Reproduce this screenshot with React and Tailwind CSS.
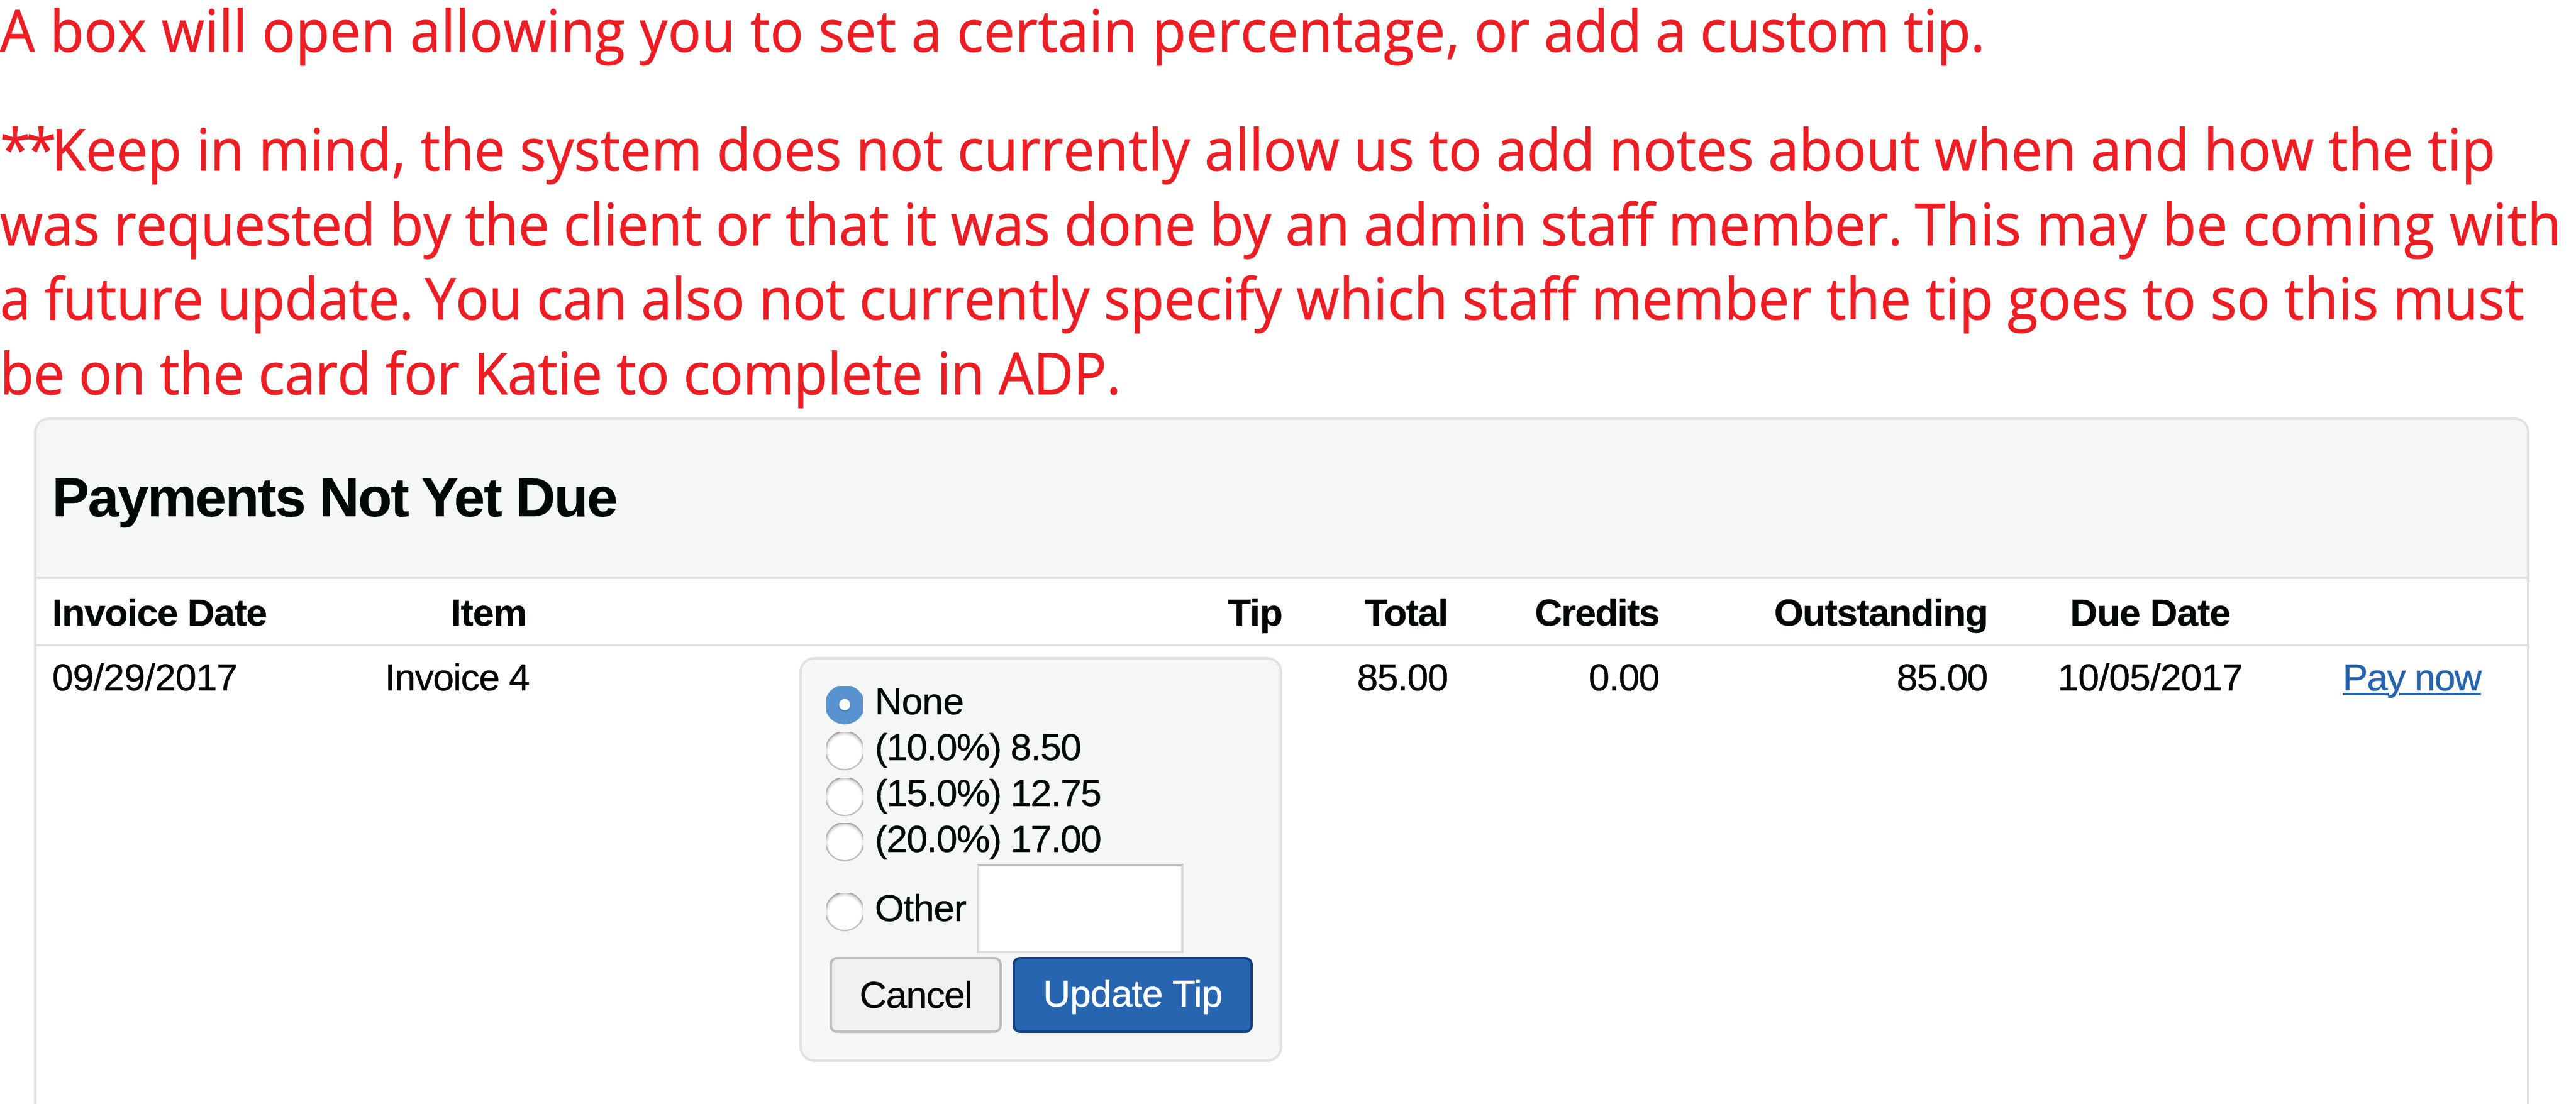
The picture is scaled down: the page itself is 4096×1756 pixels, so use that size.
import { useState } from "react";

const tipOptions = [
  { value: "none", label: "None", tracking: "tracking-[-0.5px]" },
  { value: "10", label: "(10.0%) 8.50", tracking: "tracking-[-1.35px]" },
  { value: "15", label: "(15.0%) 12.75", tracking: "tracking-[-1.35px]" },
  { value: "20", label: "(20.0%) 17.00", tracking: "tracking-[-1.35px]" },
];

const gridColumns =
  "grid grid-cols-[529px_330px_1097px_263px_336px_522px_518px_1fr] pl-[25px]";

function RadioMark({ checked }) {
  return (
    <svg viewBox="0 0 58.4 61.6" className="mt-[11px] h-[61.6px] w-[58.4px] shrink-0 overflow-hidden">
      <defs>
        <linearGradient id="rim" x1="0" y1="0" x2="0" y2="1">
          <stop offset="0" stopColor="#a6a6a6" />
          <stop offset="0.3" stopColor="#b4b4b4" />
          <stop offset="1" stopColor="#bebebe" />
        </linearGradient>
        <radialGradient id="face" cx="0.5" cy="0.54" r="0.52">
          <stop offset="0.82" stopColor="#ffffff" />
          <stop offset="1" stopColor="#cccccc" />
        </radialGradient>
      </defs>
      {checked ? (
        <>
          <circle cx="29.2" cy="29.9" r="31.6" fill="#5993cf" />
          <circle cx="29.2" cy="31.8" r="10" fill="#4684c8" />
          <circle cx="29.2" cy="29.7" r="8.9" fill="#ffffff" />
        </>
      ) : (
        <circle cx="29.2" cy="29.9" r="30.3" fill="url(#face)" stroke="url(#rim)" strokeWidth="2.2" />
      )}
    </svg>
  );
}

function TipForm() {
  const [selected, setSelected] = useState("none");
  const [other, setOther] = useState("");

  return (
    <form
      onSubmit={(event) => event.preventDefault()}
      className="mt-[17px] h-[644px] w-[768px] rounded-3xl border-4 border-[#dfe1e2] bg-[#f4f6f8] pt-[31px] pl-[39px]"
    >
      {tipOptions.map((option) => (
        <div
          key={option.value}
          onClick={() => setSelected(option.value)}
          className="flex h-[72.8px] items-center gap-[18.5px]"
        >
          <RadioMark checked={selected === option.value} />
          <span className={option.tracking}>{option.label}</span>
        </div>
      ))}

      <div className="mt-[3px] flex h-[142px] items-center">
        <div onClick={() => setSelected("other")} className="flex items-center gap-[18.5px]">
          <RadioMark checked={selected === "other"} />
          <span className="w-[162.5px] tracking-[-1px]">Other</span>
        </div>
        <input
          value={other}
          onChange={(event) => setOther(event.target.value)}
          className="h-[142px] w-[329px] border-4 border-[#d8d8d8] border-t-[#bfbfbf] bg-white px-4 outline-none"
        />
      </div>

      <div className="mt-[6px] ml-[5px] flex gap-[17px]">
        <button
          type="button"
          className="h-[121px] w-[274px] rounded-xl border-4 border-[#bdbdbd] bg-[#f0f0f0] tracking-[-1.4px]"
        >
          Cancel
        </button>
        <button
          type="submit"
          className="h-[121px] w-[382px] rounded-xl border-4 border-[#17427e] bg-[#2765b0] pb-[3px] tracking-[-0.5px] text-white"
        >
          Update Tip
        </button>
      </div>
    </form>
  );
}

function Notes() {
  return (
    <div className="origin-left scale-x-[0.965] font-['Open_Sans','Noto_Sans',sans-serif] text-[91px] whitespace-nowrap text-[#ee1c23] [-webkit-text-stroke:0.9px_#ee1c23]">
      <p className="leading-[94px] tracking-[0.55px]">
        A box will open allowing you to set a certain percentage,
        <span className="tracking-[-0.35px]"> or add a custom tip.</span>
      </p>
      <p className="mt-[83px] leading-[118.6px]">
        <span className="block tracking-[0.15px]">
          <span className="tracking-[-7.5px]">**</span>
          Keep in mind, the system does not currently allow us to add notes about when and how the tip
        </span>
        <span className="block tracking-[-0.22px]">
          was requested by the client or that it was done by an admin staff member.
          <span className="tracking-[-3px]"> </span>
          <span className="tracking-[0.85px]">This may be coming with</span>
        </span>
        <span className="block tracking-[-0.28px]">
          a future update.
          <span className="tracking-[-5px]"> </span>
          You can also not currently
          <span className="tracking-[0.12px]"> specify which staff member the tip goes to so this must</span>
        </span>
        <span className="block tracking-[-0.2px]">be on the card for Katie to complete in ADP.</span>
      </p>
    </div>
  );
}

function App() {
  return (
    <main className="flex h-[1756px] w-[4096px] flex-col overflow-hidden bg-white">
      <Notes />

      <section className="mt-[12.6px] ml-[54px] w-[3968px] flex-1 rounded-t-3xl border-4 border-b-0 border-[#dfe1e2] font-['Liberation_Sans',Arial,sans-serif] text-[60px] text-[#030708] [-webkit-text-stroke:0.5px]">
        <h2 className="h-[249px] rounded-t-[20px] bg-[#f4f6f8] pl-[25px] text-[88px] leading-[245px] font-bold tracking-[-1.75px]">
          Payments Not Yet Due
        </h2>

        <div
          className={`${gridColumns} h-[111px] border-y-4 border-[#dfe1e2] leading-[107px] font-bold tracking-[-1.3px]`}
        >
          <span className="tracking-[-1.05px]">Invoice Date</span>
          <span className="text-center tracking-[-0.7px]">Item</span>
          <span className="text-right tracking-[-0.7px]">Tip</span>
          <span className="text-right">Total</span>
          <span className="text-right">Credits</span>
          <span className="text-right">Outstanding</span>
          <span className="text-center tracking-[-0.7px]">Due Date</span>
        </div>

        <div className={`${gridColumns} items-start leading-[100px] tracking-[-1.2px]`}>
          <span className="tracking-[-0.6px]">09/29/2017</span>
          <span>Invoice 4</span>
          <div className="flex justify-end leading-[72px] tracking-normal">
            <TipForm />
          </div>
          <span className="text-right">85.00</span>
          <span className="text-right">0.00</span>
          <span className="text-right">85.00</span>
          <span className="text-center tracking-[-0.6px]">10/05/2017</span>
          <a
            href="#pay"
            className="ml-[47px] justify-self-start tracking-[-1.5px] text-[#2464af] underline decoration-4 underline-offset-[4px]"
          >
            Pay now
          </a>
        </div>
      </section>
    </main>
  );
}

export default App;
